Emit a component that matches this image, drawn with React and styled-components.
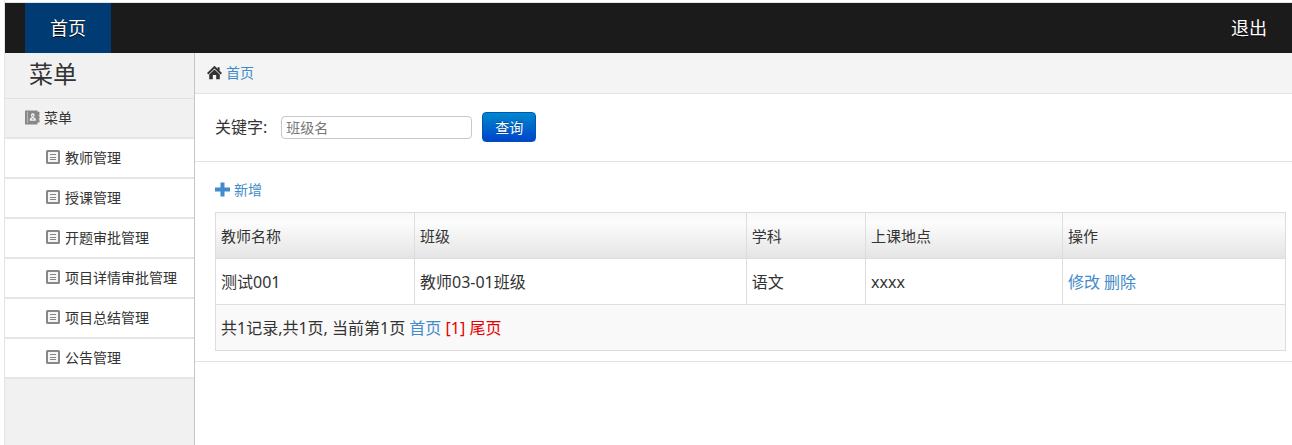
import React from 'react'
import styled, { createGlobalStyle } from 'styled-components'

const GlobalStyle = createGlobalStyle`
* {
  box-sizing: border-box;
}

body {
  margin: 0;
  background: #fff;
  color: #333;
  font-family: "Noto Sans", "Noto Sans CJK SC", sans-serif;
  font-size: 14px;
  line-height: 20px;
}
`

const Page = styled.div`
  display: flex;
  flex-direction: column;
  min-height: 100vh;
  margin-left: 4px;
  padding-top: 2px;
  border-left: 1px solid #e4e4e4;
`

const TopBar = styled.header`
  display: flex;
  justify-content: space-between;
  padding-left: 20px;
  background: #1b1b1b;
  border-top: 1px solid #e4e4e4;
`

const TopLink = styled.a`
  padding: 15px 25px;
  background: ${(props) => (props.$active ? '#003b73' : 'transparent')};
  color: #fff;
  font-size: 18px;
  text-decoration: none;
  text-shadow: 0 1px 0 #000;
`

const Body = styled.div`
  display: flex;
  flex: 1;
`

const Sidebar = styled.nav`
  flex: 0 0 190px;
  background: #f1f1f1;
  border-right: 1px solid #c6c6c6;
`

const SidebarTitle = styled.h1`
  margin: 0;
  padding: 5px 24px 8px;
  border-bottom: 1px solid #e2e2e2;
  font-size: 24px;
  font-weight: normal;
  line-height: 32px;
`

const MenuHead = styled.div`
  display: flex;
  align-items: center;
  gap: 4px;
  height: 40px;
  padding-left: 20px;
  border-bottom: 2px solid #e5e5e5;
`

const MenuList = styled.ul`
  margin: 0;
  padding: 0;
  list-style: none;
`

const MenuLink = styled.a`
  display: flex;
  align-items: center;
  gap: 5px;
  height: 40px;
  padding-left: 41px;
  background: #fff;
  border-bottom: 2px solid #e5e5e5;
  color: #333;
  text-decoration: none;
`

const Main = styled.main`
  flex: 1;
  min-width: 0;
`

const Breadcrumb = styled.div`
  display: flex;
  align-items: center;
  gap: 4px;
  padding: 10px 12px;
  background: #f4f4f4;
  border-bottom: 1px solid #e2e2e2;
`

const TextLink = styled.a`
  color: ${(props) => (props.$red ? '#e60000' : '#428bca')};
  text-decoration: none;
`

const SearchForm = styled.form`
  display: flex;
  align-items: center;
  padding: 18px 20px 19px;
  border-bottom: 1px solid #e2e2e2;
`

const Label = styled.label`
  margin-right: 14px;
  font-size: 16px;
`

const Input = styled.input`
  width: 191px;
  height: 23px;
  margin-right: 10px;
  padding: 0 4px;
  border: 1px solid #c8c8c8;
  border-radius: 4px;
  font-family: inherit;
  font-size: 14px;

  &::placeholder {
    color: #777;
  }
`

const Button = styled.button`
  height: 30px;
  padding: 0 12px;
  background: linear-gradient(#0088cc, #0044cc);
  border: 1px solid #0055bb;
  border-radius: 4px;
  color: #fff;
  font-family: inherit;
  font-size: 14px;
  text-shadow: 0 -1px 0 rgba(0, 0, 0, 0.25);
`

const Panel = styled.section`
  padding: 18px 6px 10px 20px;
  border-bottom: 1px solid #e2e2e2;
`

const AddLink = styled(TextLink)`
  display: inline-flex;
  align-items: center;
  gap: 4px;
  margin-bottom: 12px;
  vertical-align: top;
`

const Table = styled.table`
  width: 100%;
  border-collapse: collapse;
  table-layout: fixed;
  font-size: 16px;
`

const Th = styled.th`
  width: ${(props) => props.$width};
  height: 46px;
  padding: 0 5px;
  border: 1px solid #ddd;
  font-size: 15px;
  font-weight: normal;
  text-align: left;
`

const HeadRow = styled.tr`
  background: linear-gradient(#f8f8f8, #fcfcfc 20%, #e4e4e4);
`

const Td = styled.td`
  height: 46px;
  padding: 0 5px;
  background: ${(props) => (props.$shaded ? '#f9f9f9' : '#fff')};
  border: 1px solid #ddd;
`

const Icon = styled.svg`
  flex: none;
  width: ${(props) => props.$size || 15}px;
  height: ${(props) => props.$size || 15}px;
  margin-bottom: 2px;
`

const HomeIcon = () => (
  <Icon viewBox="0 0 15 15" fill="#333" aria-hidden="true">
    <path d="M7.500.8 10.600 3.700V2.300h2v3.400L15 8l-1.300 1.400L7.500 3.500 1.300 9.400 0 8z" />
    <path d="M7.500 4.500 12.800 9.500v4.700H9.200V10H5.800v4.200H2.200V9.500z" />
  </Icon>
)

const BookIcon = () => (
  <Icon viewBox="0 0 15 15" aria-hidden="true">
    <path fill="#888" d="M0 .5h12.500v1.300h2v3.100h-.8v.8h.8v3h-.8v.8h.8v3.100h-2v1.900H0z" />
    <path fill="#c4c4c4" d="M2 1.800h.8v11.400H2z" />
    <path fill="#f1f1f1" d="M7.800 3.300a1.900 1.900 0 0 1 1 3.500v.6c1.400.3 2 .9 2 1.800v1.600h-6V9.200c0-.9.6-1.500 2-1.800v-.6a1.900 1.900 0 0 1 1-3.500z" />
    <path fill="#888" d="M7.300 5h1v1.600h-1zM6.900 8.400h1.800v1.200H6.900z" />
  </Icon>
)

const ListIcon = () => (
  <Icon $size={14} viewBox="0 0 14 14" fill="none" stroke="#88888c" aria-hidden="true">
    <rect x="1" y="1" width="12" height="12" rx=".5" fill="#f4f4f4" strokeWidth="2" />
    <path d="M4 4.500h6M4 7.500h6M4 9.500h6" />
  </Icon>
)

const PlusIcon = () => (
  <Icon viewBox="0 0 15 15" fill="#428bca" aria-hidden="true">
    <path d="M5.500.5h4v5H15v4H9.500v5h-4v-5H0v-4h5.500z" />
  </Icon>
)

const menu = ['教师管理', '授课管理', '开题审批管理', '项目详情审批管理', '项目总结管理', '公告管理']

const columns = [
  { name: '教师名称', width: '18.6%' },
  { name: '班级', width: '31%' },
  { name: '学科', width: '11.15%' },
  { name: '上课地点', width: '18.4%' },
  { name: '操作', width: '20.85%' },
]

const App = () => {
  return (
    <Page>
      <GlobalStyle />
      <TopBar>
        <TopLink href="#home" $active>首页</TopLink>
        <TopLink href="#logout">退出</TopLink>
      </TopBar>
      <Body>
        <Sidebar>
          <SidebarTitle>菜单</SidebarTitle>
          <MenuHead><BookIcon />菜单</MenuHead>
          <MenuList>
            {menu.map((item) => (
              <li key={item}>
                <MenuLink href="#menu"><ListIcon />{item}</MenuLink>
              </li>
            ))}
          </MenuList>
        </Sidebar>
        <Main>
          <Breadcrumb>
            <HomeIcon />
            <TextLink href="#home">首页</TextLink>
          </Breadcrumb>
          <SearchForm onSubmit={(e) => e.preventDefault()}>
            <Label htmlFor="keyword">关键字:</Label>
            <Input id="keyword" type="text" placeholder="班级名" />
            <Button type="submit">查询</Button>
          </SearchForm>
          <Panel>
            <AddLink href="#add"><PlusIcon />新增</AddLink>
            <Table>
              <thead>
                <HeadRow>
                  {columns.map((col) => (
                    <Th key={col.name} $width={col.width}>{col.name}</Th>
                  ))}
                </HeadRow>
              </thead>
              <tbody>
                <tr>
                  <Td>测试001</Td>
                  <Td>教师03-01班级</Td>
                  <Td>语文</Td>
                  <Td>xxxx</Td>
                  <Td>
                    <TextLink href="#edit">修改</TextLink> <TextLink href="#delete">删除</TextLink>
                  </Td>
                </tr>
                <tr>
                  <Td colSpan={5} $shaded>
                    共1记录,共1页, 当前第1页 <TextLink href="#first">首页</TextLink>{' '}
                    <TextLink href="#page1" $red>[1]</TextLink>{' '}
                    <TextLink href="#last" $red>尾页</TextLink>
                  </Td>
                </tr>
              </tbody>
            </Table>
          </Panel>
        </Main>
      </Body>
    </Page>
  )
}

export default App
